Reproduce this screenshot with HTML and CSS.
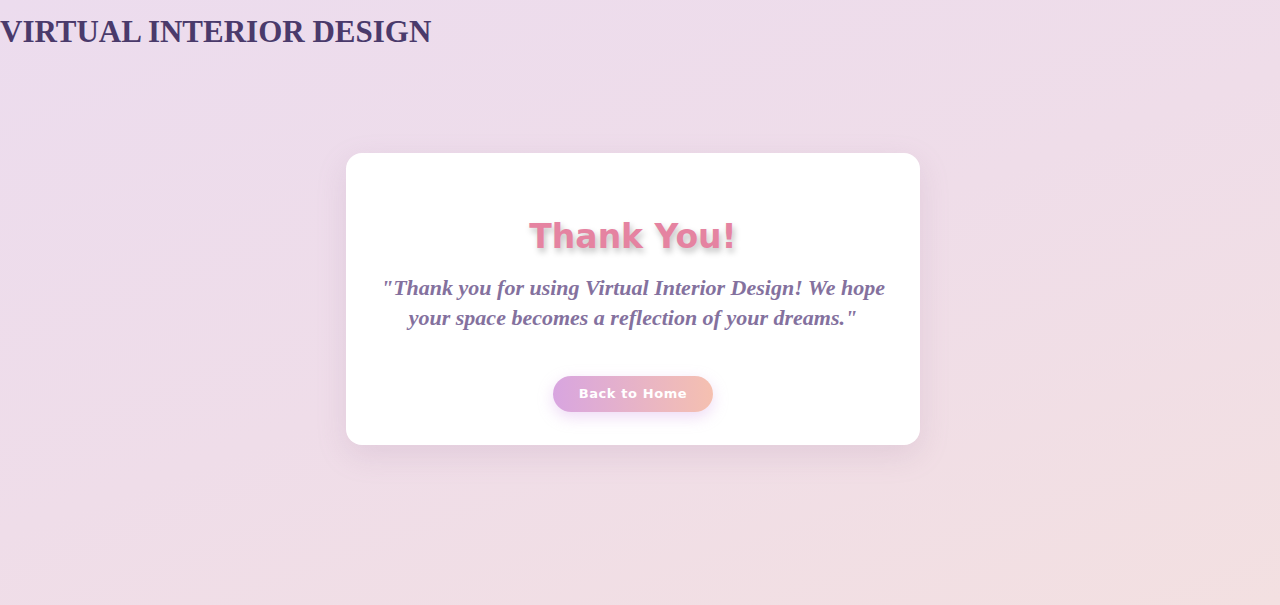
FILE: index.html
```html
<!DOCTYPE html>
<html lang="en">
<head>
<meta charset="utf-8">
<title>Thank You - Virtual Interior Design</title>
<link rel="stylesheet" href="styles.css">
</head>
<body>
<header class="site-header">
  <h1 class="brand">VIRTUAL INTERIOR DESIGN</h1>
</header>
<main class="stage">
  <section class="card">
    <h2 class="title">Thank You!</h2>
    <p class="quote">"Thank you for using Virtual Interior Design! We hope your space becomes a reflection of your dreams."</p>
    <a class="btn" href="#">Back to Home</a>
  </section>
</main>
</body>
</html>
```
FILE: styles.css
```css
html, body {
  margin: 0;
  padding: 0;
}
body {
  min-height: 605px;
  background: linear-gradient(160deg, #ecdcee 0%, #efdde9 50%, #f3e0e1 100%);
  font-family: "Liberation Serif", serif;
  overflow: hidden;
}
.site-header {
  padding: 12px 0 0 0;
  height: 48px;
}
.brand {
  margin: 0;
  font-family: "Liberation Serif", "DejaVu Serif", serif;
  font-weight: 700;
  font-size: 31px;
  line-height: 40px;
  color: #4a3a6b;
  letter-spacing: 0;
}
.stage {
  display: flex;
  justify-content: center;
  padding: 93px 14px 0 0;
}
.card {
  width: 574px;
  height: 292px;
  box-sizing: border-box;
  background: #fff;
  border-radius: 16px;
  box-shadow: 0 10px 30px rgba(160, 120, 160, 0.18);
  display: flex;
  flex-direction: column;
  align-items: center;
  padding: 62px 30px 0;
  text-align: center;
}
.title {
  margin: 0;
  font-family: "DejaVu Sans", sans-serif;
  font-weight: 700;
  font-size: 33px;
  line-height: 44px;
  color: #e583a1;
  text-shadow: 2px 4px 6px rgba(0, 0, 0, 0.25);
}
.quote {
  margin: 14px 0 0;
  font-family: "Liberation Serif", serif;
  font-style: italic;
  font-weight: 700;
  font-size: 22px;
  line-height: 30px;
  color: #84719e;
  max-width: 514px;
}
.btn {
  margin-top: 43px;
  display: inline-block;
  width: 160px;
  height: 36px;
  line-height: 36px;
  border-radius: 18px;
  background: linear-gradient(90deg, #d8a5e0 0%, #f5c0b0 100%);
  color: #fff;
  font-family: "DejaVu Sans", sans-serif;
  font-weight: 700;
  font-size: 13px;
  letter-spacing: 0.6px;
  text-decoration: none;
  box-shadow: 0 5px 15px rgba(205, 150, 225, 0.35);
}
```
